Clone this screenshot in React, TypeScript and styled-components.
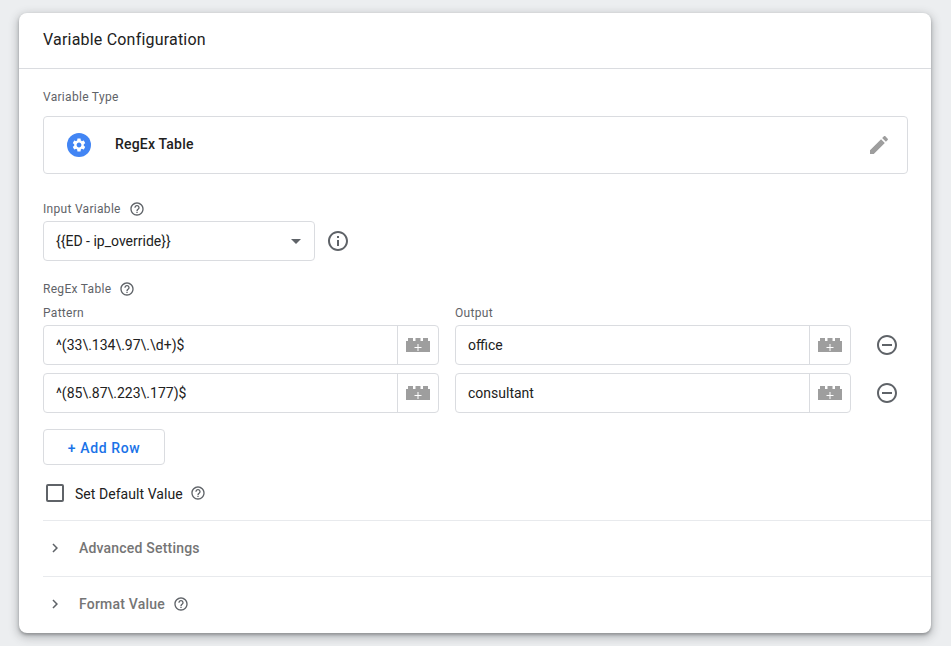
import React from "react";
import styled, { createGlobalStyle } from "styled-components";

const Global = createGlobalStyle`
  html, body { margin: 0; padding: 0; background: #eceef0; }
  body { font-family: Roboto, "Liberation Sans", sans-serif; -webkit-font-smoothing: antialiased; }
`;

const Page = styled.div`
  width: 951px;
  height: 646px;
  padding: 13px 20px 13px 19px;
  box-sizing: border-box;
  overflow: hidden;
`;
const Card = styled.div`
  background: #fff;
  border-radius: 8px;
  height: 620px;
  box-shadow: 0 2px 3px rgba(60, 64, 67, 0.35), 0 3px 8px 2px rgba(60, 64, 67, 0.28);
  overflow: hidden;
  display: flex;
  flex-direction: column;
`;
const Header = styled.div`
  height: 56px;
  padding: 0 0 2px 24px;
  box-sizing: border-box;
  display: flex;
  align-items: center;
  border-bottom: 1px solid #dadce0;
  font-size: 16px;
  letter-spacing: 0.2px;
  color: #212121;
`;
const Body = styled.div`
  padding: 21px 23px 0 24px;
  display: flex;
  flex-direction: column;
`;
const Label = styled.div`
  display: flex;
  align-items: center;
  gap: 8px;
  height: 14px;
  font-size: 12px;
  letter-spacing: 0.3px;
  color: #5f6368;
  white-space: nowrap;
`;
const TypeBox = styled.div`
  margin-top: 12px;
  height: 58px;
  box-sizing: border-box;
  border: 1px solid #dadce0;
  border-radius: 4px;
  display: flex;
  align-items: center;
  padding: 0 16px 0 23px;
`;
const TypeBadge = styled.div`
  width: 24px;
  height: 24px;
  border-radius: 50%;
  background: #4285f4;
  display: flex;
  align-items: center;
  justify-content: center;
  flex: none;
`;
const TypeName = styled.div`
  margin-left: 24px;
  padding-bottom: 2px;
  flex: 1;
  font-size: 14px;
  font-weight: 500;
  letter-spacing: 0.2px;
  color: #212121;
`;
const SelectRow = styled.div`
  margin-top: 5px;
  display: flex;
  align-items: center;
  gap: 11px;
`;
const Select = styled.div`
  width: 272px;
  height: 40px;
  box-sizing: border-box;
  border: 1px solid #dadce0;
  border-radius: 4px;
  display: flex;
  align-items: center;
  padding: 0 13px 0 12px;
  font-size: 14px;
  color: #212121;
  justify-content: space-between;
`;
const Caret = styled.div`
  width: 0;
  height: 0;
  border-left: 5px solid transparent;
  border-right: 5px solid transparent;
  border-top: 5px solid #5f6368;
`;
const Group = styled.div<{ $top: number }>`
  margin-top: ${(p) => p.$top}px;
`;
const TableHead = styled.div`
  margin-top: 10px;
  display: grid;
  grid-template-columns: 396px 396px;
  column-gap: 16px;
`;
const TableRow = styled.div<{ $top: number }>`
  margin-top: ${(p) => p.$top}px;
  display: flex;
  align-items: center;
  gap: 16px;
`;
const Field = styled.div`
  flex: none;
  width: 396px;
  height: 40px;
  box-sizing: border-box;
  border: 1px solid #dadce0;
  border-radius: 4px;
  display: flex;
  font-size: 14px;
  color: #212121;
`;
const FieldText = styled.div`
  flex: 1;
  display: flex;
  align-items: center;
  padding-left: 12px;
`;
const FieldAction = styled.div`
  width: 40px;
  border-left: 1px solid #dadce0;
  display: flex;
  align-items: center;
  justify-content: center;
`;
const RemoveSlot = styled.div`
  flex: none;
  width: 40px;
  display: flex;
  justify-content: center;
  svg { display: block; }
`;
const AddButton = styled.div`
  margin-top: 16px;
  width: 122px;
  height: 36px;
  box-sizing: border-box;
  padding-top: 2px;
  border: 1px solid #dadce0;
  border-radius: 4px;
  display: flex;
  align-items: center;
  justify-content: center;
  font-size: 14px;
  font-weight: 500;
  letter-spacing: 0.6px;
  color: #1a73e8;
`;
const CheckRow = styled.div`
  margin-top: 19px;
  padding-left: 3px;
  display: flex;
  align-items: center;
  height: 18px;
  font-size: 14px;
  color: #212121;
`;
const Checkbox = styled.div`
  width: 18px;
  height: 18px;
  box-sizing: border-box;
  border: 2px solid #5f6368;
  border-radius: 2px;
  margin-right: 11px;
`;
const CheckText = styled.span`
  position: relative;
  top: 1px;
  margin-right: 7px;
  letter-spacing: 0.05px;
`;
const Sections = styled.div`
  margin-top: 18px;
  margin-left: 24px;
`;
const Section = styled.div`
  height: 53px;
  border-top: 1px solid #e8eaed;
  display: flex;
  align-items: center;
  padding-bottom: 2px;
  box-sizing: content-box;
  font-size: 14px;
  font-weight: 500;
  letter-spacing: 0.2px;
  color: #757575;
`;
const Chevron = styled.div`
  width: 36px;
  display: flex;
  align-items: center;
  svg { display: block; margin-left: 3px; }
`;
const SectionTitle = styled.span`
  margin-right: 8px;
`;

const Help = () => (
  <svg width="16" height="16" viewBox="0 0 24 24" fill="#5f6368">
    <path d="M11 18h2v-2h-2v2zm1-16C6.48 2 2 6.48 2 12s4.48 10 10 10 10-4.48 10-10S17.52 2 12 2zm0 18c-4.41 0-8-3.59-8-8s3.59-8 8-8 8 3.59 8 8-3.59 8-8 8zm0-14c-2.21 0-4 1.79-4 4h2c0-1.1.9-2 2-2s2 .9 2 2c0 2-3 1.75-3 5h2c0-2.25 3-2.5 3-5 0-2.21-1.79-4-4-4z" />
  </svg>
);

const Brick = () => (
  <svg width="24" height="14" viewBox="0 0 24 14">
    <path fill="#9e9e9e" d="M0 3h2V0h5v3h2.500V0h5v3H17V0h5v3h2v11H0z" />
    <path fill="#fff" d="M11.500 6h1v3h3v1h-3v3h-1v-3h-3V9h3z" />
  </svg>
);

const Remove = () => (
  <svg width="24" height="24" viewBox="0 0 24 24" fill="#5f6368">
    <path d="M7 11v2h10v-2H7zm5-9C6.480 2 2 6.480 2 12s4.480 10 10 10 10-4.480 10-10S17.520 2 12 2zm0 18c-4.410 0-8-3.590-8-8s3.590-8 8-8 8 3.590 8 8-3.590 8-8 8z" />
  </svg>
);

const ChevronIcon = () => (
  <svg width="18" height="18" viewBox="0 0 24 24" fill="#5f6368">
    <path d="M10 6L8.590 7.410 13.170 12l-4.580 4.590L10 18l6-6z" />
  </svg>
);

const rows = [
  { pattern: "^(33\\.134\\.97\\.\\d+)$", output: "office" },
  { pattern: "^(85\\.87\\.223\\.177)$", output: "consultant" },
];

export default function App() {
  return (
    <Page>
      <Global />
      <Card>
        <Header>Variable Configuration</Header>
        <Body>
          <Label>Variable Type</Label>
          <TypeBox>
            <TypeBadge>
              <svg width="16" height="16" viewBox="0 0 24 24" fill="#fff">
                <path d="M19.140 12.940c.04-.3.06-.61.06-.94 0-.32-.02-.64-.07-.94l2.030-1.580c.18-.14.23-.41.12-.61l-1.920-3.320c-.12-.22-.37-.29-.59-.22l-2.390.96c-.5-.38-1.030-.7-1.620-.94l-.36-2.540c-.04-.24-.24-.41-.48-.41h-3.840c-.24 0-.43.17-.47.41l-.36 2.540c-.59.24-1.130.57-1.620.94l-2.390-.96c-.22-.08-.47 0-.59.22L2.740 8.870c-.12.21-.08.47.12.61l2.030 1.580c-.05.3-.09.63-.09.94s.02.64.07.94l-2.030 1.580c-.18.14-.23.41-.12.61l1.920 3.320c.12.22.37.29.59.22l2.390-.96c.5.38 1.030.7 1.620.94l.36 2.540c.05.24.24.41.48.41h3.840c.24 0 .44-.17.47-.41l.36-2.540c.59-.24 1.130-.56 1.620-.94l2.390.96c.22.08.47 0 .59-.22l1.920-3.320c.12-.22.07-.47-.12-.61l-2.010-1.580zM12 15.600c-1.980 0-3.600-1.620-3.600-3.600s1.620-3.600 3.600-3.600 3.600 1.620 3.600 3.600-1.620 3.600-3.600 3.600z" />
              </svg>
            </TypeBadge>
            <TypeName>RegEx Table</TypeName>
            <svg width="24" height="24" viewBox="0 0 24 24" fill="#9e9e9e">
              <path d="M3 17.250V21h3.750L17.810 9.940l-3.750-3.750L3 17.250zM20.710 7.040c.39-.39.39-1.020 0-1.410l-2.340-2.340c-.39-.39-1.020-.39-1.410 0l-1.830 1.830 3.750 3.750 1.830-1.830z" />
            </svg>
          </TypeBox>
          <Group $top={28}>
            <Label>
              Input Variable <Help />
            </Label>
          </Group>
          <SelectRow>
            <Select>
              {"{{ED - ip_override}}"}
              <Caret />
            </Select>
            <svg width="24" height="24" viewBox="0 0 24 24" fill="#5f6368">
              <path d="M11 7h2v2h-2zm0 4h2v6h-2zm1-9C6.480 2 2 6.480 2 12s4.480 10 10 10 10-4.480 10-10S17.520 2 12 2zm0 18c-4.410 0-8-3.590-8-8s3.590-8 8-8 8 3.590 8 8-3.590 8-8 8z" />
            </svg>
          </SelectRow>
          <Group $top={21}>
            <Label>
              RegEx Table <Help />
            </Label>
          </Group>
          <TableHead>
            <Label>Pattern</Label>
            <Label>Output</Label>
          </TableHead>
          {rows.map((r, i) => (
            <TableRow key={r.output} $top={i === 0 ? 5 : 8}>
              <Field>
                <FieldText>{r.pattern}</FieldText>
                <FieldAction>
                  <Brick />
                </FieldAction>
              </Field>
              <Field>
                <FieldText>{r.output}</FieldText>
                <FieldAction>
                  <Brick />
                </FieldAction>
              </Field>
              <RemoveSlot>
                <Remove />
              </RemoveSlot>
            </TableRow>
          ))}
          <AddButton>+ Add Row</AddButton>
          <CheckRow>
            <Checkbox />
            <CheckText>Set Default Value</CheckText>
            <Help />
          </CheckRow>
        </Body>
        <Sections>
          <Section>
            <Chevron>
              <ChevronIcon />
            </Chevron>
            <SectionTitle>Advanced Settings</SectionTitle>
          </Section>
          <Section>
            <Chevron>
              <ChevronIcon />
            </Chevron>
            <SectionTitle>Format Value</SectionTitle>
            <Help />
          </Section>
        </Sections>
      </Card>
    </Page>
  );
}
